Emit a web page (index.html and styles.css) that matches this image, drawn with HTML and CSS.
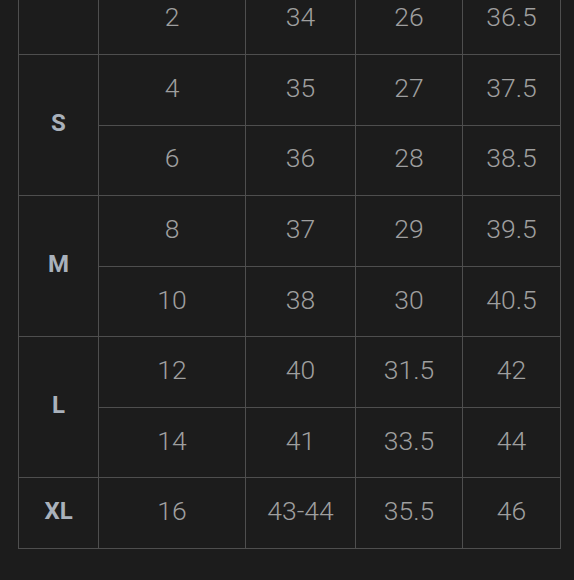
FILE: index.html
```html
<!DOCTYPE html>
<html>
<head>
<meta charset="utf-8">
<link rel="stylesheet" href="styles.css">
</head>
<body>
<div class="wrap">
<table class="size-table">
  <colgroup>
    <col class="c1"><col class="c2"><col class="c3"><col class="c4"><col class="c5">
  </colgroup>
  <tbody>
    <tr><td class="label"></td><td>2</td><td>34</td><td>26</td><td>36.5</td></tr>
    <tr><td class="label" rowspan="2">S</td><td>4</td><td>35</td><td>27</td><td>37.5</td></tr>
    <tr><td>6</td><td>36</td><td>28</td><td>38.5</td></tr>
    <tr><td class="label" rowspan="2">M</td><td>8</td><td>37</td><td>29</td><td>39.5</td></tr>
    <tr><td>10</td><td>38</td><td>30</td><td>40.5</td></tr>
    <tr><td class="label" rowspan="2">L</td><td>12</td><td>40</td><td>31.5</td><td>42</td></tr>
    <tr><td>14</td><td>41</td><td>33.5</td><td>44</td></tr>
    <tr><td class="label">XL</td><td>16</td><td>43-44</td><td>35.5</td><td>46</td></tr>
  </tbody>
</table>
</div>
</body>
</html>
```
FILE: styles.css
```css
html, body {
  margin: 0;
  padding: 0;
  background: #1c1c1c;
  height: 100%;
  overflow: hidden;
}
.wrap {
  padding-left: 18px;
  margin-top: -16.5px;
}
.size-table {
  border-collapse: collapse;
  table-layout: fixed;
  width: 542px;
  font-family: Roboto, "Liberation Sans", sans-serif;
}
.c1 { width: 80px; }
.c2 { width: 147px; }
.c3 { width: 110px; }
.c4 { width: 107px; }
.c5 { width: 98px; }
.size-table td {
  border: 1px solid #4e4e4e;
  height: 64.57px;
  padding: 0 0 5px 0;
  text-align: center;
  vertical-align: middle;
  color: #9f9f9f;
  font-size: 26.5px;
  font-weight: 300;
}
.size-table td.label {
  color: #a9b1bb;
  font-weight: 700;
  font-size: 24px;
}
```
